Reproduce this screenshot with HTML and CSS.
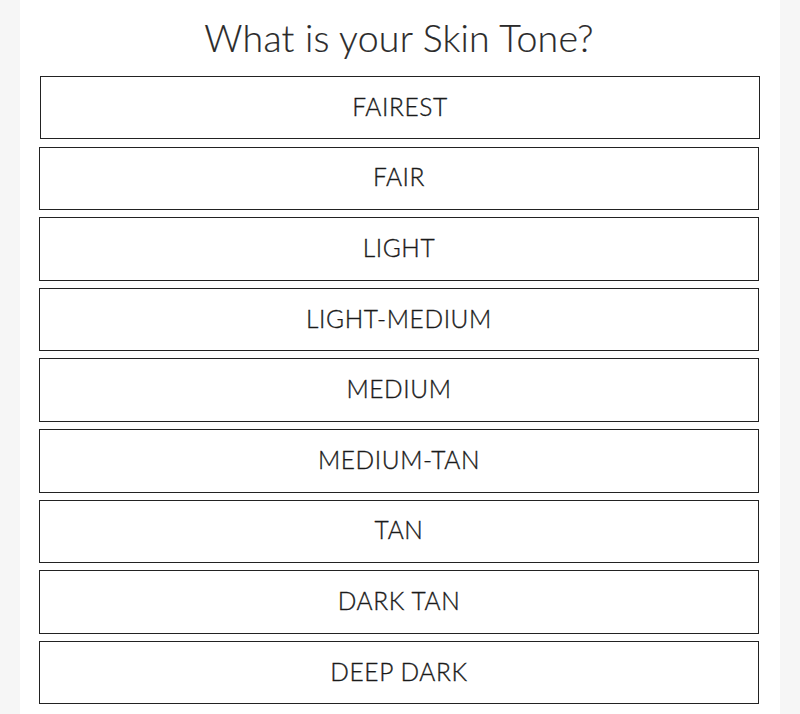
FILE: index.html
```html
<!DOCTYPE html>
<html>
<head>
<meta charset="utf-8">
<link rel="stylesheet" href="styles.css">
</head>
<body>
<div class="page">
  <h1 class="title">What is your Skin Tone?</h1>
  <div class="options">
    <div class="option option-first">FAIREST</div>
    <div class="option">FAIR</div>
    <div class="option">LIGHT</div>
    <div class="option">LIGHT-MEDIUM</div>
    <div class="option">MEDIUM</div>
    <div class="option">MEDIUM-TAN</div>
    <div class="option">TAN</div>
    <div class="option">DARK TAN</div>
    <div class="option">DEEP DARK</div>
  </div>
</div>
</body>
</html>
```
FILE: styles.css
```css
html, body {
  margin: 0;
  padding: 0;
  background: #f6f6f6;
  height: 100%;
  overflow: hidden;
}
.page {
  width: 760px;
  margin: 0 auto;
  background: #fff;
  min-height: 714px;
  padding: 0 21px 0 19px;
  box-sizing: border-box;
  font-family: Lato, "Open Sans", sans-serif;
  color: #222;
}
.title {
  margin: 0;
  height: 76px;
  line-height: 76px;
  text-align: center;
  font-size: 37.5px;
  font-weight: 300;
  color: #2a2a2a;
  letter-spacing: 0.2px;
  -webkit-text-stroke: 0.2px #2a2a2a;
}
.options {
  display: flex;
  flex-direction: column;
  gap: 7px;
}
.option {
  height: 63.6px;
  box-sizing: border-box;
  border: 1.5px solid #222;
  display: flex;
  align-items: center;
  justify-content: center;
  padding-bottom: 3px;
  font-size: 24.5px;
  font-weight: 300;
  color: #1a1a1a;
  letter-spacing: 0.6px;
  -webkit-text-stroke: 0.35px #1a1a1a;
}
.option-first {
  margin-left: 1px;
  margin-right: -1px;
  height: 63px;
  margin-bottom: 0.6px;
}
```
